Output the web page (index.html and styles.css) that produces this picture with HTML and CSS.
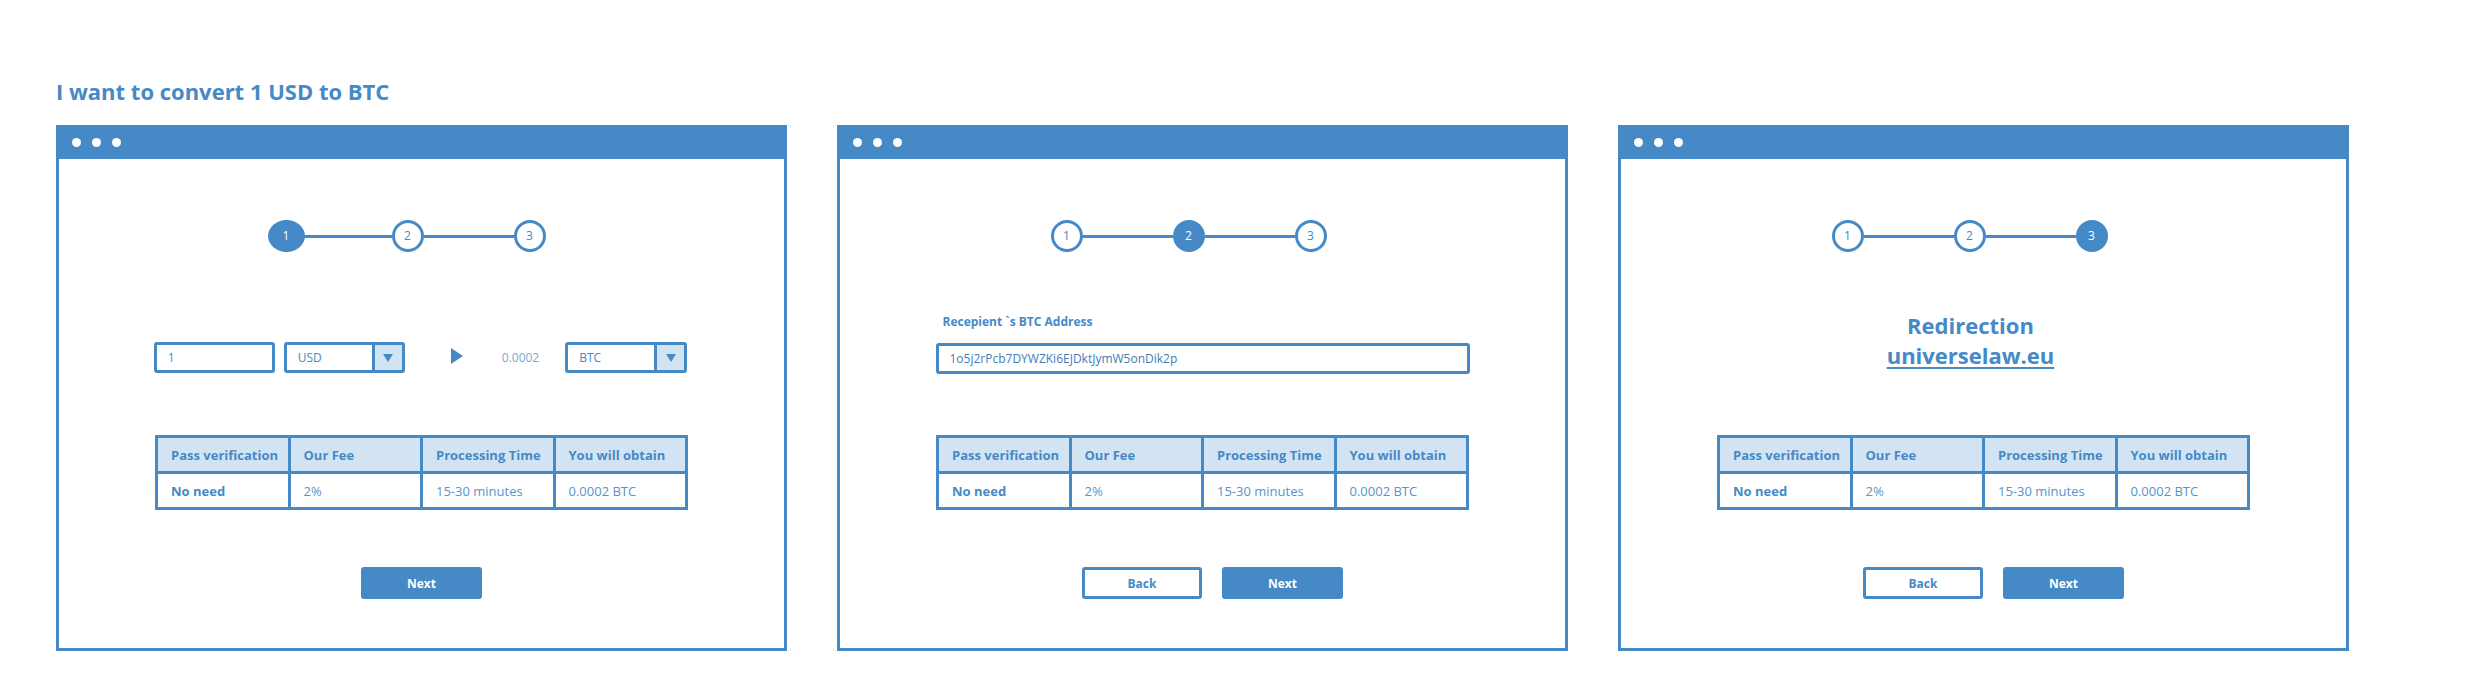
FILE: index.html
```html
<!DOCTYPE html>
<html lang="en">
<head>
<meta charset="utf-8">
<title>Convert USD to BTC</title>
<link rel="stylesheet" href="styles.css">
</head>
<body>
<div class="page">
  <h1 class="title">I want to convert 1 USD to BTC</h1>
  <div class="windows">

    <section class="window">
      <div class="win-bar"><span class="dot"></span><span class="dot"></span><span class="dot"></span></div>
      <div class="win-body">
        <div class="stepper">
          <span class="step active wide">1</span><span class="line"></span>
          <span class="step">2</span><span class="line"></span>
          <span class="step">3</span>
        </div>
        <div class="middle middle-convert">
          <div class="convert-row">
            <div class="field field-amount">1</div>
            <div class="select select-from"><span class="select-text">USD</span><span class="select-btn"><span class="caret"></span></span></div>
            <span class="play"></span>
            <span class="result">0.0002</span>
            <div class="select select-to"><span class="select-text">BTC</span><span class="select-btn"><span class="caret"></span></span></div>
          </div>
        </div>
        <table class="info">
          <tr><th>Pass verification</th><th>Our Fee</th><th>Processing Time</th><th>You will obtain</th></tr>
          <tr><td class="strong">No need</td><td>2%</td><td>15-30 minutes</td><td>0.0002 BTC</td></tr>
        </table>
        <div class="actions actions-single">
          <button class="btn btn-primary">Next</button>
        </div>
      </div>
    </section>

    <section class="window">
      <div class="win-bar"><span class="dot"></span><span class="dot"></span><span class="dot"></span></div>
      <div class="win-body">
        <div class="stepper">
          <span class="step">1</span><span class="line"></span>
          <span class="step active">2</span><span class="line"></span>
          <span class="step">3</span>
        </div>
        <div class="middle middle-address">
          <div class="address-block">
            <div class="label">Recepient `s BTC Address</div>
            <div class="field field-address">1o5j2rPcb7DYWZKi6EJDktJymW5onDik2p</div>
          </div>
        </div>
        <table class="info">
          <tr><th>Pass verification</th><th>Our Fee</th><th>Processing Time</th><th>You will obtain</th></tr>
          <tr><td class="strong">No need</td><td>2%</td><td>15-30 minutes</td><td>0.0002 BTC</td></tr>
        </table>
        <div class="actions actions-pair">
          <button class="btn btn-outline">Back</button>
          <button class="btn btn-primary">Next</button>
        </div>
      </div>
    </section>

    <section class="window">
      <div class="win-bar"><span class="dot"></span><span class="dot"></span><span class="dot"></span></div>
      <div class="win-body">
        <div class="stepper">
          <span class="step">1</span><span class="line"></span>
          <span class="step">2</span><span class="line"></span>
          <span class="step active">3</span>
        </div>
        <div class="middle middle-redirect">
          <div class="redirect">
            <div>Redirection</div>
            <a class="redirect-link" href="#">universelaw.eu</a>
          </div>
        </div>
        <table class="info">
          <tr><th>Pass verification</th><th>Our Fee</th><th>Processing Time</th><th>You will obtain</th></tr>
          <tr><td class="strong">No need</td><td>2%</td><td>15-30 minutes</td><td>0.0002 BTC</td></tr>
        </table>
        <div class="actions actions-pair">
          <button class="btn btn-outline">Back</button>
          <button class="btn btn-primary">Next</button>
        </div>
      </div>
    </section>

  </div>
</div>
</body>
</html>
```

FILE: styles.css
```css
* { box-sizing: border-box; }

html, body {
  margin: 0;
  padding: 0;
  background: #ffffff;
}

body {
  font-family: "Open Sans", "Noto Sans", "Liberation Sans", sans-serif;
  color: #4589c6;
}

.page {
  padding: 0 0 0 56px;
}

.title {
  margin: 0;
  padding-top: 76px;
  font-size: 22px;
  line-height: 30px;
  font-weight: 700;
  color: #4589c6;
}

.windows {
  display: flex;
  gap: 50px;
  margin-top: 19px;
}

.window {
  width: 731px;
  height: 526px;
  border: 3px solid #4589c6;
  border-top: 0;
  display: flex;
  flex-direction: column;
}

.win-bar {
  height: 34px;
  background: #4589c6;
  margin: 0 -3px;
  display: flex;
  align-items: center;
  gap: 11px;
  padding-left: 16px;
  padding-top: 1px;
}

.dot {
  width: 9px;
  height: 9px;
  border-radius: 50%;
  background: #ffffff;
}

.win-body {
  display: flex;
  flex-direction: column;
  align-items: center;
}

/* stepper */
.stepper {
  display: flex;
  align-items: center;
  margin-top: 61px;
  height: 32px;
  padding-right: 28px;
}

.step {
  position: relative;
  z-index: 1;
  width: 32px;
  height: 32px;
  border-radius: 50%;
  border: 3px solid #4589c6;
  background: #ffffff;
  color: #4589c6;
  font-size: 12px;
  line-height: 26px;
  text-align: center;
}

.step.active {
  background: #4589c6;
  color: #ffffff;
}

.step.wide {
  width: 37px;
  margin-left: -2px;
  margin-right: -3px;
}

.line {
  width: 90px;
  height: 3px;
  background: #4589c6;
}

/* middle area */
.middle {
  height: 183px;
  width: 100%;
  display: flex;
  flex-direction: column;
  align-items: center;
}

.middle-convert { padding-top: 90px; }
.middle-address { padding-top: 62px; }
.middle-redirect { padding-top: 58px; padding-right: 26px; }

.convert-row {
  display: flex;
  align-items: center;
  height: 31px;
  padding-right: 2px;
}

.field {
  height: 31px;
  border: 3px solid #4589c6;
  border-radius: 3px;
  font-size: 12px;
  line-height: 25px;
  padding-left: 11px;
  color: #4589c6;
  background: #ffffff;
}

.field-amount { width: 121px; }

.select {
  height: 31px;
  border: 3px solid #4589c6;
  border-radius: 3px;
  display: flex;
  background: #ffffff;
}

.select-from { width: 121px; margin-left: 9px; }
.select-to { width: 122px; margin-left: 26px; }

.select-text {
  flex: 1;
  font-size: 12px;
  line-height: 25px;
  padding-left: 11px;
}

.select-btn {
  width: 30px;
  border-left: 3px solid #4589c6;
  background: #d2e4f4;
  display: flex;
  align-items: center;
  justify-content: center;
}

.caret {
  width: 0;
  height: 0;
  border-left: 5px solid transparent;
  border-right: 5px solid transparent;
  border-top: 8px solid #4589c6;
  margin-top: 1px;
}

.play {
  width: 0;
  height: 0;
  border-top: 8px solid transparent;
  border-bottom: 8px solid transparent;
  border-left: 12px solid #4589c6;
  margin-left: 46px;
  margin-top: -3px;
}

.result {
  margin-left: 39px;
  font-size: 12px;
  color: #78a6d6;
  line-height: 31px;
}

.address-block {
  width: 534px;
}

.label {
  font-size: 12px;
  font-weight: 700;
  line-height: 16px;
  padding-left: 7px;
  margin-bottom: 13px;
}

.field-address {
  width: 534px;
  color: #3f7cb9;
}

.redirect {
  text-align: center;
  font-size: 22px;
  font-weight: 700;
  line-height: 30px;
}

.redirect-link {
  display: block;
  color: #4589c6;
  text-decoration: underline;
  text-decoration-thickness: 2px;
  text-underline-offset: 3px;
}

/* table */
.info {
  border-collapse: separate;
  border-spacing: 3px;
  background: #4589c6;
  width: 533px;
  table-layout: fixed;
}

.info th,
.info td {
  height: 33px;
  padding: 0 0 0 13px;
  text-align: left;
  font-size: 13px;
  line-height: 16px;
  vertical-align: middle;
}

.info th {
  background: #d2e4f4;
  font-weight: 700;
  color: #4589c6;
}

.info td {
  background: #ffffff;
  font-weight: 400;
  color: #5a93cb;
}

.info td.strong {
  font-weight: 700;
  color: #4589c6;
}

/* buttons */
.actions {
  display: flex;
  gap: 20px;
  margin-top: 57px;
}

.actions-pair { padding-left: 20px; }

.btn {
  width: 120px;
  height: 32px;
  border-radius: 3px;
  font-family: "Open Sans", "Noto Sans", "Liberation Sans", sans-serif;
  font-size: 12px;
  font-weight: 700;
  cursor: pointer;
  padding: 0;
}

.btn-primary {
  background: #4589c6;
  border: 0;
  color: #ffffff;
  width: 121px;
}

.btn-outline {
  background: #ffffff;
  border: 3px solid #4589c6;
  color: #4589c6;
}
```
